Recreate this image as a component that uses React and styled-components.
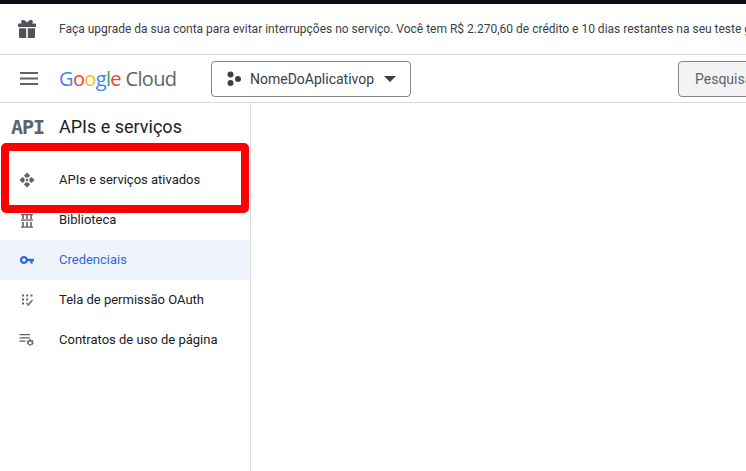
import styled, { createGlobalStyle } from "styled-components";

const GlobalStyle = createGlobalStyle`
  html, body {
    margin: 0;
    padding: 0;
    height: 100%;
    background: #fff;
    overflow: hidden;
  }
  #root {
    height: 100%;
  }
`;

const Page = styled.div`
  position: relative;
  width: 746px;
  height: 471px;
  overflow: hidden;
  display: flex;
  flex-direction: column;
  font-family: Roboto, "Liberation Sans", sans-serif;
  color: #202124;
  border-top: 4px solid #0d0d17;
  box-sizing: border-box;
`;

const Banner = styled.div`
  height: 50px;
  flex: none;
  display: flex;
  align-items: center;
  border-bottom: 1px solid #dadce0;
  white-space: nowrap;
  overflow: hidden;
`;

const BannerIcon = styled.div`
  width: 59px;
  flex: none;
  display: flex;
  padding-left: 17px;
  box-sizing: border-box;
`;

const BannerText = styled.span`
  font-size: 12px;
  color: #3c4043;
`;

const Header = styled.header`
  height: 47px;
  flex: none;
  display: flex;
  align-items: center;
  border-bottom: 1px solid #dadce0;
  white-space: nowrap;
`;

const MenuButton = styled.div`
  width: 60px;
  flex: none;
  display: flex;
  padding-left: 20px;
  box-sizing: border-box;
`;

const Logo = styled.div`
  width: 151px;
  margin-left: -1px;
  margin-right: 1px;
  flex: none;
  font-family: "Open Sans", Roboto, sans-serif;
  font-size: 20px;
  letter-spacing: -0.65px;
  color: #5f6368;
`;

const LogoLetter = styled.span`
  color: ${(p) => p.$color};
`;

const ProjectPicker = styled.div`
  width: 200px;
  height: 36px;
  flex: none;
  display: flex;
  align-items: center;
  border: 1px solid #80868b;
  border-radius: 4px;
  box-sizing: border-box;
  padding-left: 14px;
  font-size: 14px;
  color: #3c4043;
`;

const ProjectName = styled.span`
  margin-left: 8px;
`;

const Caret = styled.span`
  margin-left: 10px;
  width: 0;
  height: 0;
  border-left: 6px solid transparent;
  border-right: 6px solid transparent;
  border-top: 6px solid #3c4043;
`;

const SearchBox = styled.div`
  margin-left: 267px;
  width: 120px;
  height: 36px;
  flex: none;
  display: flex;
  align-items: center;
  background: #f1f3f4;
  border: 1px solid #80868b;
  border-radius: 4px;
  box-sizing: border-box;
  padding-left: 16px;
  font-size: 14px;
  color: #5f6368;
`;

const Body = styled.div`
  flex: 1;
  display: flex;
  min-height: 0;
`;

const Sidebar = styled.nav`
  width: 251px;
  flex: none;
  border-right: 1px solid #dadce0;
  box-sizing: border-box;
`;

const SidebarTitle = styled.div`
  height: 48px;
  margin-bottom: 9px;
  padding-bottom: 1px;
  box-sizing: border-box;
  display: flex;
  align-items: center;
  font-size: 18px;
  color: #202124;
`;

const ApiMark = styled.span`
  width: 59px;
  flex: none;
  padding-left: 11px;
  box-sizing: border-box;
  font-family: "DejaVu Sans Mono", "Liberation Mono", monospace;
  font-size: 20px;
  font-weight: 700;
  letter-spacing: -1px;
  color: #5f6368;
`;

const NavRow = styled.div`
  height: 40px;
  padding-bottom: 1px;
  box-sizing: border-box;
  display: flex;
  align-items: center;
  font-size: 13px;
  color: ${(p) => (p.$active ? "#3367d6" : "#202124")};
  background: ${(p) => (p.$active ? "#eff4fc" : "transparent")};
`;

const NavIcon = styled.span`
  width: 59px;
  flex: none;
  display: flex;
  padding-left: 18px;
  box-sizing: border-box;
  color: ${(p) => (p.$active ? "#3367d6" : "#5f6368")};
`;

const Highlight = styled.div`
  position: absolute;
  left: 1px;
  top: 139px;
  width: 248px;
  height: 70px;
  border: 8px solid #fe0000;
  border-radius: 5px;
  box-sizing: border-box;
`;

const Icon = ({ children }) => (
  <svg width="18" height="18" viewBox="0 0 18 18" fill="currentColor">
    {children}
  </svg>
);

const GiftIcon = () => (
  <svg width="20" height="20" viewBox="0 0 20 20" fill="#4f5256">
    <path d="M5 1.200c1.600-.9 3.400.2 5 2.400 1.600-2.200 3.400-3.300 5-2.400 1.300.8 1.100 2.600-.2 3.400H18a1 1 0 0 1 1 1V8H1V5.600a1 1 0 0 1 1-1h3.200C3.900 3.800 3.700 2 5 1.200z" />
    <path d="M2 9.300h7.200V19H3.300A1.300 1.300 0 0 1 2 17.700zM10.800 9.300H18v8.400a1.300 1.300 0 0 1-1.300 1.300h-5.900z" />
  </svg>
);

const MenuIcon = () => (
  <svg width="18" height="14" viewBox="0 0 18 14" fill="#5f6368">
    <rect y="0" width="18" height="2" />
    <rect y="5.500" width="18" height="2" />
    <rect y="11" width="18" height="2" />
  </svg>
);

const ProjectDots = () => (
  <svg width="16" height="16" viewBox="0 0 16 16" fill="#3c4043">
    <circle cx="4.500" cy="3.500" r="3" />
    <circle cx="4.500" cy="12" r="3" />
    <circle cx="12" cy="8" r="3" />
  </svg>
);

const MoveIcon = () => (
  <Icon>
    <path d="M9 1.500 12 4.500 10.500 6.500h-3L6 4.500zM9 16.500l3-3-1.500-2h-3L6 13.500zM1.500 9l3-3 2 1.500v3l-2 1.500zM16.500 9l-3-3-2 1.500v3l2 1.500z" />
    <circle cx="9" cy="9" r="1.300" />
  </Icon>
);

const LibraryIcon = () => (
  <Icon>
    <path d="M3 3h12v1.200H3zM4.200 4.200h1.600v4.300H4.200zM8.200 4.200h1.600v4.300H8.200zM12.200 4.200h1.600v4.300h-1.600z" />
    <path d="M3 8.500h12v1.300H3zM4.200 11h1.600v4.500H4.200zM8.200 11h1.600v4.500H8.200zM12.200 11h1.600v4.500h-1.600zM3 15.500h12v1.300H3z" />
  </Icon>
);

const KeyIcon = () => (
  <Icon>
    <path d="M6 5a4 4 0 0 1 3.800 2.800H16v2.400h-1.300v2.300h-2.400v-2.300H9.800A4 4 0 1 1 6 5zm0 2.200a1.800 1.800 0 1 0 0 3.600 1.800 1.800 0 0 0 0-3.600z" />
  </Icon>
);

const ConsentIcon = () => (
  <Icon>
    <path d="M4 3.500h2v2H4zM8.200 3.500h2v2h-2zM12.500 3.500h2v2h-2zM4 7.500h2v2H4zM8.200 7.500h2v2h-2zM4 11.500h2v2H4zM8.200 11.800h1.500v1.500H8.200z" />
    <path d="M9.500 13.500 14 8.500l1 1-4.500 5.200-1.300.2z" />
  </Icon>
);

const UsageIcon = () => (
  <Icon>
    <path d="M1.500 3h10.500v1.200H1.500zM1.500 6.300h10.500v1.200H1.500zM1.500 9.600h6v1.200h-6z" />
    <path d="M13 8.200l.4 1.400 1.300-.4.900 1.200-.8 1.100.8 1.100-.9 1.200-1.300-.4-.4 1.400h-1.500l-.4-1.400-1.300.4-.9-1.200.8-1.100-.8-1.100.9-1.200 1.300.4.400-1.400zm-.75 2.300a1 1 0 1 0 0 2.800 1 1 0 0 0 0-2.800z" />
  </Icon>
);

const navItems = [
  { label: "APIs e serviços ativados", icon: <MoveIcon /> },
  { label: "Biblioteca", icon: <LibraryIcon /> },
  { label: "Credenciais", icon: <KeyIcon />, active: true },
  { label: "Tela de permissão OAuth", icon: <ConsentIcon /> },
  { label: "Contratos de uso de página", icon: <UsageIcon /> },
];

const App = () => {
  return (
    <Page>
      <GlobalStyle />
      <Banner>
        <BannerIcon>
          <GiftIcon />
        </BannerIcon>
        <BannerText>
          Faça upgrade da sua conta para evitar interrupções no serviço. Você tem R$ 2.270,60 de crédito e 10 dias restantes na seu teste gratuito.
        </BannerText>
      </Banner>
      <Header>
        <MenuButton>
          <MenuIcon />
        </MenuButton>
        <Logo>
          <LogoLetter $color="#4285f4">G</LogoLetter>
          <LogoLetter $color="#ea4335">o</LogoLetter>
          <LogoLetter $color="#fbbc05">o</LogoLetter>
          <LogoLetter $color="#4285f4">g</LogoLetter>
          <LogoLetter $color="#34a853">l</LogoLetter>
          <LogoLetter $color="#ea4335">e</LogoLetter> Cloud
        </Logo>
        <ProjectPicker>
          <ProjectDots />
          <ProjectName>NomeDoAplicativop</ProjectName>
          <Caret />
        </ProjectPicker>
        <SearchBox>Pesquisar</SearchBox>
      </Header>
      <Body>
        <Sidebar>
          <SidebarTitle>
            <ApiMark>API</ApiMark>
            APIs e serviços
          </SidebarTitle>
          {navItems.map((item) => (
            <NavRow key={item.label} $active={item.active}>
              <NavIcon $active={item.active}>{item.icon}</NavIcon>
              {item.label}
            </NavRow>
          ))}
        </Sidebar>
      </Body>
      <Highlight />
    </Page>
  );
};

export default App;
